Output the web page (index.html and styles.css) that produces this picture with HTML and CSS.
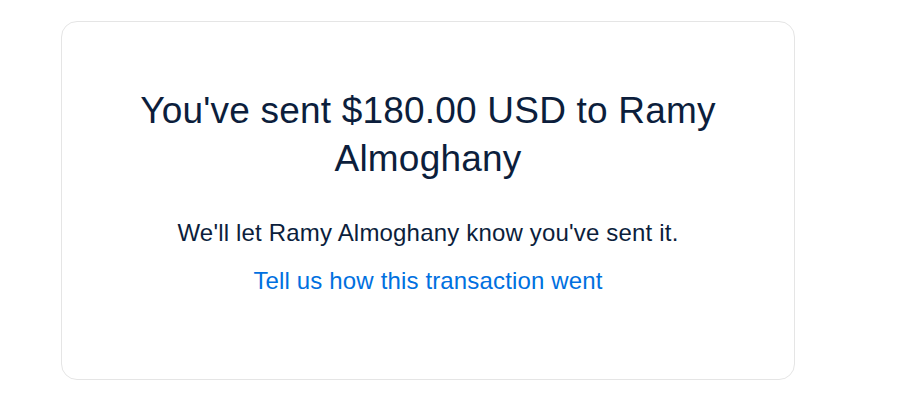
FILE: index.html
```html
<!DOCTYPE html>
<html>
<head>
<meta charset="utf-8">
<link rel="stylesheet" href="styles.css">
</head>
<body>
<div class="page">
  <div class="card">
    <h1 class="title">You've sent $180.00 USD to Ramy Almoghany</h1>
    <p class="message">We'll let Ramy Almoghany know you've sent it.</p>
    <a class="feedback" href="#">Tell us how this transaction went</a>
  </div>
</div>
</body>
</html>
```
FILE: styles.css
```css
html, body {
  margin: 0;
  padding: 0;
  background: #ffffff;
}
body {
  font-family: "Liberation Sans", Arial, sans-serif;
  color: #0c1e3c;
}
.page {
  padding: 21px 0 0 61px;
}
.card {
  box-sizing: border-box;
  width: 734px;
  height: 359px;
  border: 1px solid #e5e5e5;
  border-radius: 16px;
  padding: 65px 64px 0;
  display: flex;
  flex-direction: column;
  align-items: center;
  text-align: center;
}
.title {
  margin: 0;
  font-size: 37px;
  font-weight: 400;
  line-height: 48px;
  letter-spacing: 0.2px;
}
.message {
  margin: 34px 0 0;
  font-size: 24px;
  line-height: 32px;
  letter-spacing: 0.18px;
}
.feedback {
  margin-top: 16px;
  font-size: 24px;
  line-height: 32px;
  letter-spacing: 0.15px;
  color: #0070e0;
  text-decoration: none;
}
```
